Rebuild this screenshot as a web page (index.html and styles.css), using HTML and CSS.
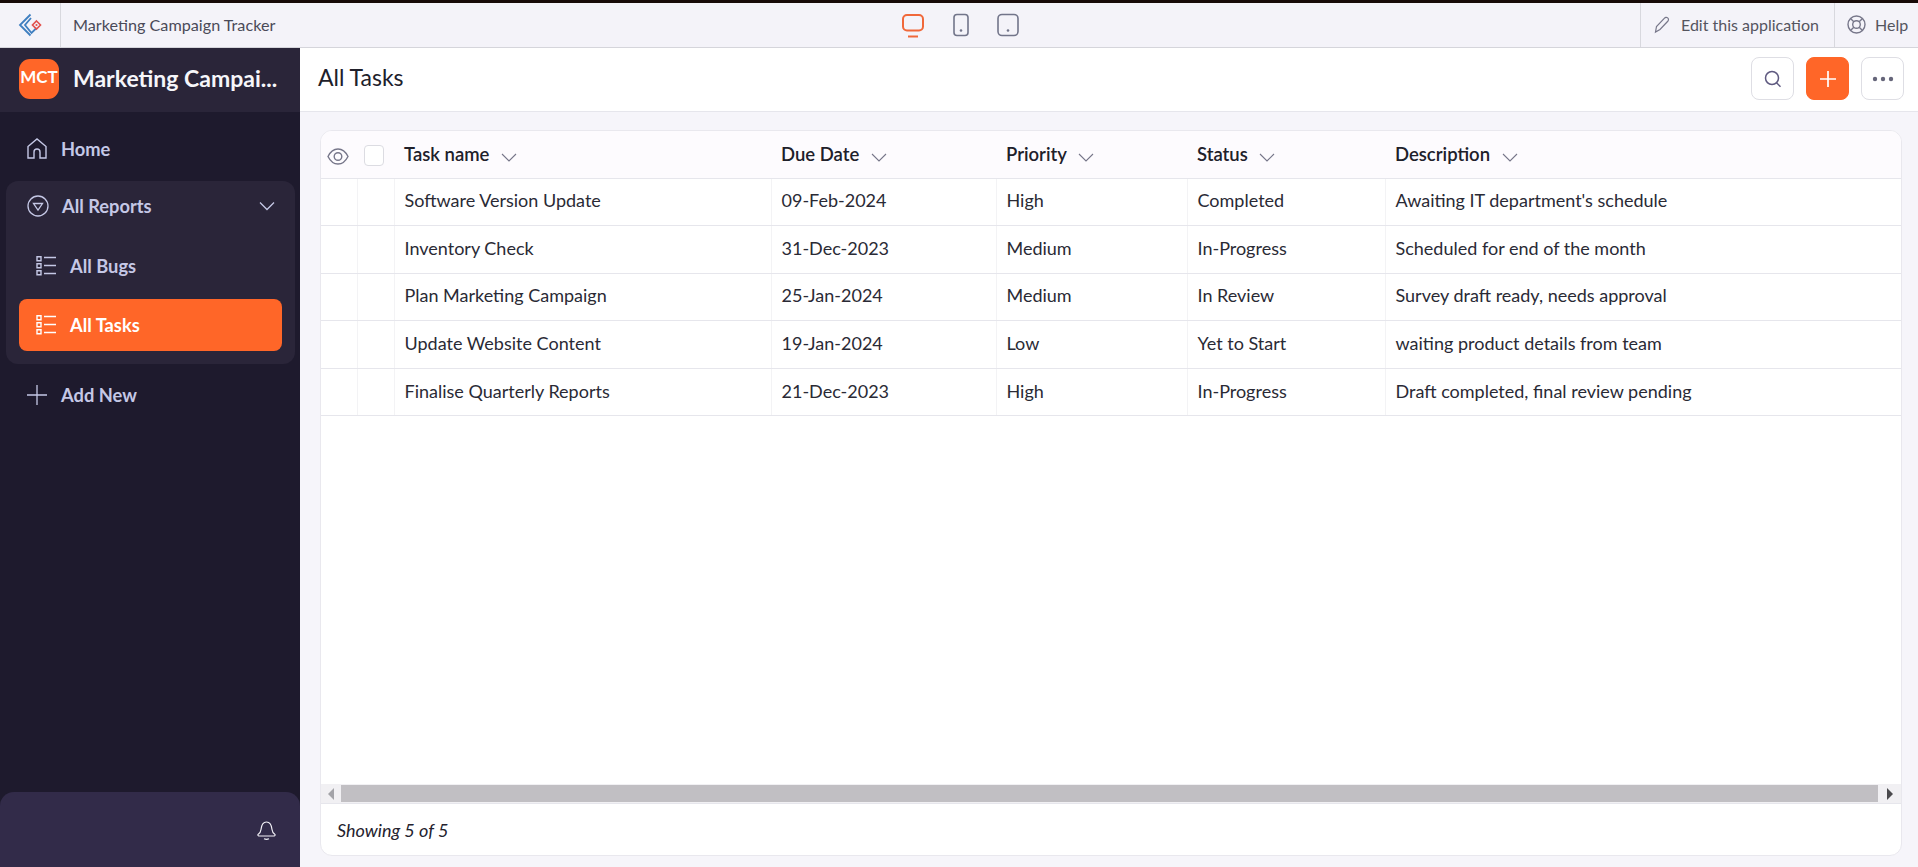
FILE: index.html
```html
<!DOCTYPE html>
<html lang="en">
<head>
<meta charset="utf-8">
<title>Marketing Campaign Tracker</title>
<link rel="stylesheet" href="styles.css">
</head>
<body>
<header class="topbar">
  <div class="tb-logo">
    <svg width="24" height="24" viewBox="0 0 24 24" fill="none">
      <path d="M12.500 1.500 2 12l10.500 10.500" stroke="#3f7fc0" stroke-width="1.800"/>
      <path d="M13 5 7 12l6.500 8 5-5" stroke="#3f7fc0" stroke-width="1.800"/>
      <path d="M18.500 8 22.500 12 18.500 16 14.500 12Z" stroke="#e2504c" stroke-width="1.600"/>
      <circle cx="18.500" cy="12" r="1.100" fill="#e2504c"/>
    </svg>
  </div>
  <div class="tb-title"><span>Marketing Campaign Tracker</span></div>
  <div class="tb-devices">
    <svg width="24" height="25" viewBox="0 0 24 25" fill="none" stroke="#f0683a" stroke-width="2"><rect x="2" y="2" width="20" height="15.500" rx="4"/><path d="M7 23.500h10"/></svg>
    <svg width="18" height="24" viewBox="0 0 18 24" fill="none"><rect x="2" y="1.500" width="14" height="21" rx="3" stroke="#72758a" stroke-width="1.600"/><circle cx="9" cy="17.500" r="1.300" fill="#72758a"/></svg>
    <svg width="22" height="24" viewBox="0 0 22 24" fill="none"><rect x="1" y="1.500" width="20" height="21" rx="4" stroke="#72758a" stroke-width="1.600"/><circle cx="11" cy="17.500" r="1.300" fill="#72758a"/></svg>
  </div>
  <div class="tb-action tb-edit">
    <svg width="18" height="18" viewBox="0 0 18 18" fill="none" stroke="#77778a" stroke-width="1.200"><path d="M2.500 16 3.500 10.500 11.500 2.200a2 2 0 0 1 3.500 2.800L7 13.500Z"/></svg>
    <span>Edit this application</span>
  </div>
  <div class="tb-action tb-help">
    <svg width="19" height="19" viewBox="0 0 19 19" fill="none" stroke="#77778a" stroke-width="1.400"><circle cx="9.500" cy="9.500" r="8.500"/><circle cx="9.500" cy="9.500" r="3.800"/><path d="m3.500 3.500 3.300 3.300m5.400 5.400 3.300 3.300m0-12-3.300 3.300m-5.400 5.400-3.300 3.300"/></svg>
    <span>Help</span>
  </div>
</header>

<div class="app">
  <aside class="sidebar">
    <div class="brand">
      <div class="brand-mark">MCT</div>
      <div class="brand-name">Marketing Campai...</div>
    </div>
    <nav class="nav">
      <div class="nav-item nav-home">
        <svg width="20" height="21" viewBox="0 0 20 21" fill="none" stroke="#c5c8e6" stroke-width="1.400"><path d="M1 8.500 10 1l9 7.500V20h-6v-6a3 3 0 0 0-6 0v6H1Z"/></svg>
        <span>Home</span>
      </div>
      <div class="nav-group">
        <div class="nav-item nav-reports">
          <svg width="22" height="22" viewBox="0 0 22 22" fill="none" stroke="#c5c8e6" stroke-width="1.300"><circle cx="11" cy="11" r="10"/><path d="M6.500 8.500h9L11 15Z"/></svg>
          <span>All Reports</span>
          <svg class="chev" width="16" height="10" viewBox="0 0 16 10" fill="none" stroke="#c5c8e6" stroke-width="1.300"><path d="m1 1.500 7 7 7-7"/></svg>
        </div>
        <div class="sub-list">
          <div class="sub-item">
            <svg width="20" height="20" viewBox="0 0 20 20" fill="none" stroke="#c5c8e6" stroke-width="1.400"><path d="M1 .7h4v4H1zM1 7.700h4v4H1zM1 14.700h4v4H1zM8 1.500h12M8 9.500h12M8 17.500h12"/></svg>
            <span>All Bugs</span>
          </div>
          <div class="sub-item active">
            <svg width="20" height="20" viewBox="0 0 20 20" fill="none" stroke="#fff" stroke-width="1.400"><path d="M1 .7h4v4H1zM1 7.700h4v4H1zM1 14.700h4v4H1zM8 1.500h12M8 9.500h12M8 17.500h12"/></svg>
            <span>All Tasks</span>
          </div>
        </div>
      </div>
      <div class="nav-item nav-add">
        <svg width="20" height="20" viewBox="0 0 20 20" fill="none" stroke="#c5c8e6" stroke-width="1.300"><path d="M10 0v20M0 10h20"/></svg>
        <span>Add New</span>
      </div>
    </nav>
    <div class="side-foot">
      <svg width="21" height="21" viewBox="0 0 21 21" fill="none" stroke="#f1f0f6" stroke-width="1.200"><path d="M2 15.500c1.800-1 2.700-2.500 3-5 .4-4 2.400-7.500 5.500-7.500s5.100 3.500 5.500 7.500c.3 2.500 1.200 4 3 5 .5 1-.5 1.500-1.500 1.500h-14c-1 0-2-.5-1.500-1.500Z"/><path d="M8 19.800q2.500 1 5 0"/></svg>
    </div>
  </aside>

  <main class="main">
    <div class="page-head">
      <h1 class="page-title">All Tasks</h1>
      <div class="head-actions">
        <button class="icon-btn" type="button" aria-label="Search">
          <svg width="18" height="18" viewBox="0 0 18 18" fill="none" stroke="#5f5a80" stroke-width="1.500"><circle cx="8" cy="8" r="6.500"/><path d="m12.500 12.700 4 4"/></svg>
        </button>
        <button class="icon-btn add-btn" type="button" aria-label="Add">
          <svg width="18" height="18" viewBox="0 0 18 18" fill="none" stroke="#fff" stroke-width="1.700"><path d="M9 1v16M1 9h16"/></svg>
        </button>
        <button class="icon-btn" type="button" aria-label="More">
          <svg width="22" height="6" viewBox="0 0 22 6" fill="#66667a"><circle cx="3" cy="3" r="2.200"/><circle cx="11" cy="3" r="2.200"/><circle cx="19" cy="3" r="2.200"/></svg>
        </button>
      </div>
    </div>

    <section class="card">
      <div class="table-wrap">
        <table class="grid">
          <colgroup>
            <col class="c-eye"><col class="c-check"><col class="c-name"><col class="c-date"><col class="c-prio"><col class="c-status"><col class="c-desc">
          </colgroup>
          <thead>
            <tr>
              <th class="tool"><svg class="eye" width="22" height="17" viewBox="0 0 22 17" fill="none" stroke="#77778a" stroke-width="1.400"><path d="M1 8.500c2.500-5 6-7.500 10-7.500s7.500 2.500 10 7.500c-2.500 5-6 7.500-10 7.500S3.500 13.500 1 8.500Z"/><circle cx="11" cy="8.500" r="3.800"/></svg></th>
              <th class="tool"><span class="checkbox"></span></th>
              <th>Task name <svg class="sort" width="16" height="9" viewBox="0 0 16 9" fill="none" stroke="#77778a" stroke-width="1.100"><path d="m1 1 7 7 7-7"/></svg></th>
              <th>Due Date <svg class="sort" width="16" height="9" viewBox="0 0 16 9" fill="none" stroke="#77778a" stroke-width="1.100"><path d="m1 1 7 7 7-7"/></svg></th>
              <th>Priority <svg class="sort" width="16" height="9" viewBox="0 0 16 9" fill="none" stroke="#77778a" stroke-width="1.100"><path d="m1 1 7 7 7-7"/></svg></th>
              <th>Status <svg class="sort" width="16" height="9" viewBox="0 0 16 9" fill="none" stroke="#77778a" stroke-width="1.100"><path d="m1 1 7 7 7-7"/></svg></th>
              <th>Description <svg class="sort" width="16" height="9" viewBox="0 0 16 9" fill="none" stroke="#77778a" stroke-width="1.100"><path d="m1 1 7 7 7-7"/></svg></th>
            </tr>
          </thead>
          <tbody>
            <tr><td></td><td></td><td>Software Version Update</td><td>09-Feb-2024</td><td>High</td><td>Completed</td><td>Awaiting IT department's schedule</td></tr>
            <tr><td></td><td></td><td>Inventory Check</td><td>31-Dec-2023</td><td>Medium</td><td>In-Progress</td><td>Scheduled for end of the month</td></tr>
            <tr><td></td><td></td><td>Plan Marketing Campaign</td><td>25-Jan-2024</td><td>Medium</td><td>In Review</td><td>Survey draft ready, needs approval</td></tr>
            <tr><td></td><td></td><td>Update Website Content</td><td>19-Jan-2024</td><td>Low</td><td>Yet to Start</td><td>waiting product details from team</td></tr>
            <tr><td></td><td></td><td>Finalise Quarterly Reports</td><td>21-Dec-2023</td><td>High</td><td>In-Progress</td><td>Draft completed, final review pending</td></tr>
          </tbody>
        </table>
      </div>
      <div class="scrollbar">
        <span class="arrow arrow-left"></span>
        <span class="thumb"></span>
        <span class="arrow arrow-right"></span>
      </div>
      <div class="card-foot">Showing 5 of 5</div>
    </section>
  </main>
</div>
</body>
</html>
```

FILE: styles.css
```css
* { box-sizing: border-box; }
html, body { height: 100%; }
body {
  margin: 0;
  display: flex;
  flex-direction: column;
  overflow: hidden;
  font-family: Lato, "Liberation Sans", sans-serif;
  background: #f6f5fa;
  color: #24222e;
}

/* top bar */
.topbar {
  flex: 0 0 48px;
  display: flex;
  align-items: stretch;
  background: #f4f3f9;
  border-top: 3px solid #170a08;
  border-bottom: 1px solid #d5d5db;
}
.tb-logo {
  width: 61px;
  display: flex;
  align-items: center;
  justify-content: center;
  border-right: 1px solid #d8d8de;
}
.tb-title {
  width: 840px;
  padding: 0 0 2px 12px;
  display: flex;
  align-items: center;
  font-size: 16.200px;
  color: #4a4a58;
}
.tb-devices {
  display: flex;
  align-items: center;
  gap: 27px;
  flex: 1;
}
.tb-action {
  display: flex;
  align-items: center;
  gap: 10px;
  font-size: 16px;
  color: #55555f;
  border-left: 1px solid #d8d8de;
  padding-bottom: 1px;
}
.tb-edit { width: 194px; padding-left: 12px; }
.tb-help { width: 84px; padding-left: 12px; gap: 9px; }

/* layout */
.app { flex: 1; display: flex; min-height: 0; }

/* sidebar */
.sidebar {
  width: 300px;
  flex: none;
  display: flex;
  flex-direction: column;
  background: #1e1a2d;
  color: #c5c8e6;
}
.brand {
  height: 64px;
  display: flex;
  align-items: center;
  gap: 14px;
  padding: 0 0 2px 19px;
  background: #2a2539;
}
.brand-mark {
  width: 40px;
  height: 40px;
  border-radius: 11px;
  background: #ff6628;
  color: #fff;
  font-size: 17px;
  font-weight: 700;
  text-align: center;
  line-height: 35px;
}
.brand-name {
  font-size: 23px;
  font-weight: 700;
  color: #f6f6fa;
  white-space: nowrap;
  margin-bottom: 3px;
}
.nav { flex: 1; display: flex; flex-direction: column; padding-top: 12px; }
.nav-item, .sub-item {
  display: flex;
  align-items: center;
  font-size: 18.300px;
  font-weight: 700;
  padding-bottom: 1px;
}
.nav-item { flex: none; height: 50px; gap: 14px; padding-left: 27px; }
.nav-group {
  margin: 7px 0 0 6px;
  width: 289px;
  height: 183px;
  background: #2a2539;
  border-radius: 12px;
}
.nav-group .nav-item { padding-left: 21px; gap: 13px; }
.chev { margin-left: auto; margin-right: 20px; }
.sub-list { display: flex; flex-direction: column; gap: 7px; padding-top: 9px; }
.sub-item {
  height: 52px;
  gap: 14px;
  margin: 0 13px;
  padding-left: 17px;
  border-radius: 8px;
}
.sub-item.active { background: #ff6628; color: #fff; }
.nav-add { margin-top: 6px; }
.side-foot {
  height: 75px;
  display: flex;
  align-items: center;
  justify-content: flex-end;
  padding-right: 23px;
  background: #322b49;
  border-radius: 14px 14px 0 0;
}

/* main */
.main { flex: 1; min-width: 0; display: flex; flex-direction: column; padding-bottom: 11px; }
.page-head {
  flex: 0 0 64px;
  display: flex;
  align-items: center;
  justify-content: space-between;
  padding: 0 14px 2px 18px;
  background: #fff;
  border-bottom: 1px solid #e6e6ec;
}
.page-title { margin: 0 0 3px; font-size: 23px; font-weight: 400; color: #20202a; }
.head-actions { display: flex; gap: 12px; }
.icon-btn {
  width: 43px;
  height: 43px;
  padding: 0;
  display: flex;
  align-items: center;
  justify-content: center;
  background: #fff;
  border: 1px solid #dedee4;
  border-radius: 8px;
}
.add-btn { background: #ff6628; border-color: #ff6628; }

/* card */
.card {
  flex: 1;
  min-height: 0;
  margin: 18px 16px 0 20px;
  display: flex;
  flex-direction: column;
  background: #fff;
  border: 1px solid #e9e8ee;
  border-radius: 12px;
  overflow: hidden;
}
.table-wrap { flex: 1; min-height: 0; overflow: hidden; }
.grid { width: 1719px; table-layout: fixed; border-collapse: collapse; font-size: 18px; }
.c-eye { width: 36px; }
.c-check { width: 37px; }
.c-name { width: 377px; }
.c-date { width: 225px; }
.c-prio { width: 191px; }
.c-status { width: 198px; }
.c-desc { width: 655px; }
.grid th {
  height: 47px;
  padding: 0 10px 1px;
  text-align: left;
  font-size: 18.500px;
  font-weight: 600;
  color: #20202a;
  background: #fdfbfe;
  border-bottom: 1px solid #e6e6ec;
  white-space: nowrap;
}
.grid th.tool { padding: 0; text-align: center; }
.grid th.tool svg, .checkbox { vertical-align: middle; }
.eye { margin-right: 2px; }
.checkbox {
  display: inline-block;
  width: 20px;
  height: 21px;
  margin-right: 3px;
  border: 1px solid #dcdce2;
  border-radius: 4px;
  background: #fff;
}
.sort { margin-left: 7px; vertical-align: -1px; }
.grid td {
  height: 47.600px;
  padding: 0 10px 3px;
  color: #2a2a35;
  border-bottom: 1px solid #e6e6ec;
  border-right: 1px solid #f3f3f5;
  white-space: nowrap;
}

/* scrollbar */
.scrollbar {
  flex: 0 0 20px;
  display: flex;
  align-items: center;
  background: #f1f0f3;
  border-bottom: 1px solid #e6e6ec;
}
.arrow { height: 12px; width: 0; flex: 0 0 0; }
.arrow-left { border-right: 6px solid #a3a3a8; border-top: 6px solid transparent; border-bottom: 6px solid transparent; margin: 0 7px; }
.arrow-right { border-left: 6px solid #4a4a4d; border-top: 6px solid transparent; border-bottom: 6px solid transparent; margin: 0 8px 0 9px; }
.thumb { flex: 1; height: 17px; background: #c1bfc3; }

/* footer */
.card-foot {
  flex: 0 0 51px;
  display: flex;
  align-items: center;
  padding-left: 16px;
  font-size: 18px;
  font-style: italic;
  color: #24222e;
}
```
